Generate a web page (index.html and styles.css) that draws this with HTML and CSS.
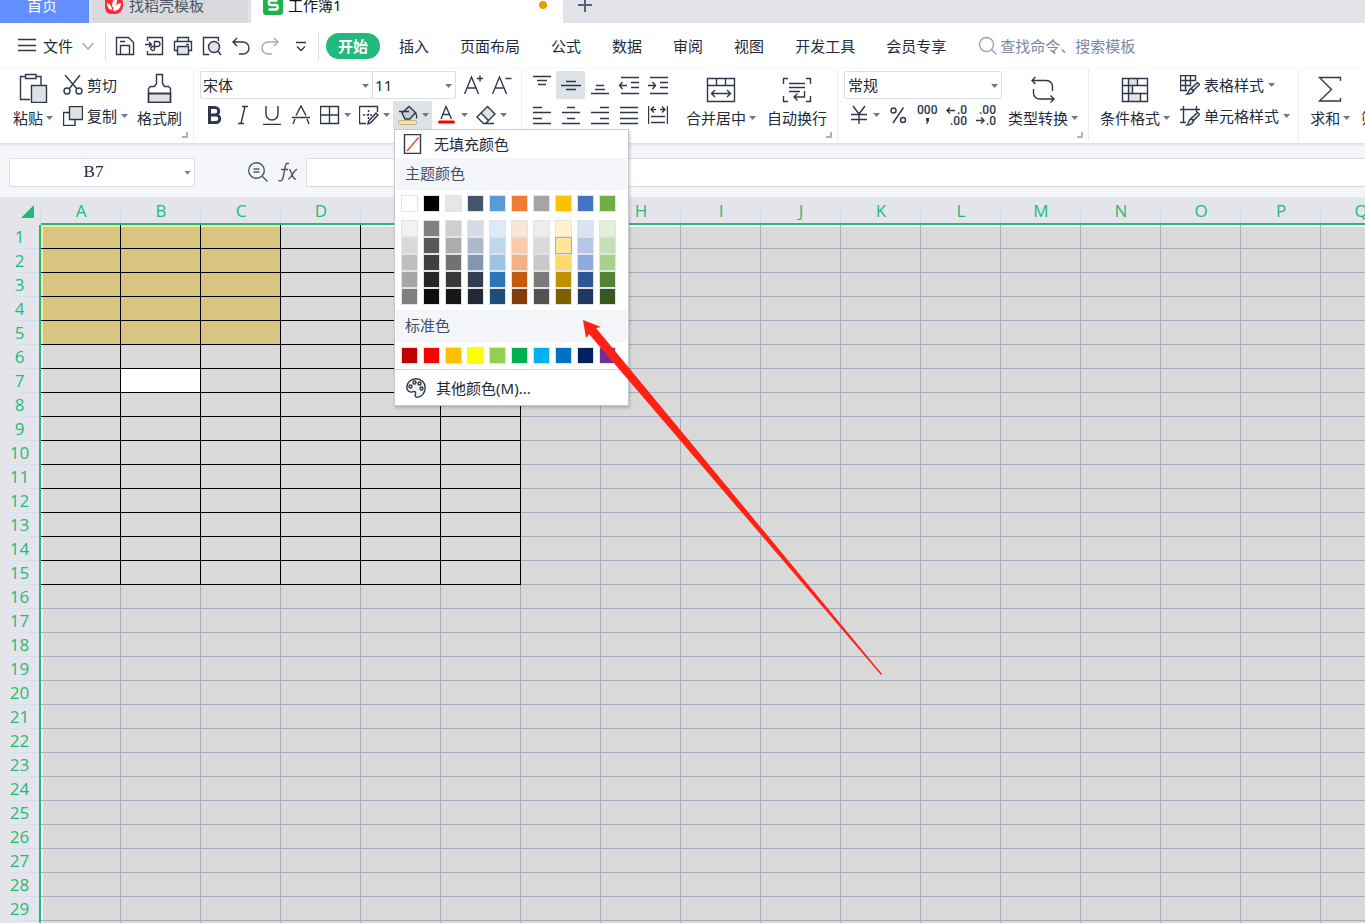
FILE: index.html
```html
<!DOCTYPE html>
<html lang="zh-CN">
<head>
<meta charset="utf-8">
<title>工作簿1</title>
<link rel="stylesheet" href="styles.css">
</head>
<body>
<header class="tabs">
  <button class="tab tab-home">首页</button>
  <button class="tab tab-docer">
    <svg class="tab-icon" viewBox="0 0 20 20"><path d="M1 0h10a8 8 0 0 1 8 8v3a8 8 0 0 1-8 8H7a6 6 0 0 1-6-6z" fill="#fb2c36"/><path d="M8 15C4 14 3 11 3 8c3 1 5 3 5 7zM9 13C7 9 9 5 12 2c2 4 1 8-3 11zM9 16c0-4 3-7 8-8 0 5-3 8-8 8z" fill="#fff"/></svg>
    找稻壳模板</button>
  <button class="tab tab-book">
    <svg class="tab-icon" viewBox="0 0 20 20"><rect width="20" height="20" rx="3" fill="#1fb14c"/><path d="M14.500 5.500H8a2.200 2.200 0 0 0 0 4.500h4.500a2.200 2.200 0 0 1 0 4.500H5.500" fill="none" stroke="#fff" stroke-width="2.400"/></svg>
    工作簿1<span class="unsaved"></span></button>
  <button class="tab-new" aria-label="新建"><svg viewBox="0 0 16 16"><path d="M8 1v14M1 8h14" stroke="#56617f" stroke-width="2"/></svg></button>
</header>

<nav class="menu">
  <button class="file">
    <svg class="i20" viewBox="0 0 20 20"><path d="M1 3.500h18M1 9.500h18M1 14.500h18"/></svg>
    文件
    <svg class="i12 faint" viewBox="0 0 12 12"><path d="M.5 3L6 9l5.500-6"/></svg>
  </button>
  <span class="rule"></span>
  <div class="quick">
    <button aria-label="保存"><svg class="i20" viewBox="0 0 20 20"><path d="M1.500 1.500h12l5 5v12h-17z"/><path d="M5.500 18V9.500h9V18M5 5.500h5"/></svg></button>
    <button aria-label="输出为PDF"><svg class="i20" viewBox="0 0 20 20"><path d="M3.500 5V1.500h15v17h-15V15M1 8.500h6M5 6l2.500 2.500L5 11"/><path d="M10.500 11V5.500h3a2.500 2.500 0 0 1 0 5H9a2 2 0 1 0 1.500 3V9"/></svg></button>
    <button aria-label="打印"><svg class="i20" viewBox="0 0 20 20"><path d="M4.500 5.500v-4h11v4M4.500 14.500h-3v-9h17v9h-3"/><path class="tint" d="M4.500 10.500h11v8h-11z"/><path d="M13 8.500h3"/></svg></button>
    <button aria-label="打印预览"><svg class="i20" viewBox="0 0 20 20"><path d="M5 18.500H1.500v-17h15V5M5 18.500h2M16 15l3 4"/><circle class="tint" cx="12" cy="11" r="5.500"/></svg></button>
    <button aria-label="撤销"><svg class="i20" viewBox="0 0 20 20"><path d="M6 2L2 6l4 4M2 6h10a6 6 0 0 1 0 12H8"/></svg></button>
    <button aria-label="恢复"><svg class="i20 faint" viewBox="0 0 20 20"><path d="M14 2l4 4-4 4M18 6H8a6 6 0 0 0 0 12h4"/></svg></button>
    <button aria-label="自定义"><svg class="i20" viewBox="0 0 20 20"><path d="M6 6.500h10M7 10.500l4 4 4-4"/></svg></button>
  </div>
  <span class="rule"></span>
  <button class="pill">开始</button>
  <div class="menu-tabs">
    <button>插入</button><button>页面布局</button><button>公式</button><button>数据</button><button>审阅</button><button>视图</button><button>开发工具</button><button>会员专享</button>
  </div>
  <label class="search">
    <svg class="i20" viewBox="0 0 20 20"><circle cx="8.500" cy="8.500" r="7"/><path d="M13.500 13.500l5 5"/></svg>
    <input type="text" placeholder="查找命令、搜索模板" aria-label="查找命令、搜索模板">
  </label>
</nav>

<section class="ribbon">
  <div class="group group-clip">
    <button class="big">
      <svg class="i30" viewBox="0 0 30 30"><path d="M12 26.500H2.500v-23H7M18 3.500h5V12"/><path d="M7.500 1.500h10.500v4H7.500z"/><path class="tint" d="M13.500 12.500h15v17h-15z"/></svg>
      <span>粘贴<i class="caret"></i></span>
    </button>
    <div class="stack lines">
      <button class="line"><svg class="i20" viewBox="0 0 20 20"><path d="M2 0l12 14M17 0L6 14"/><circle cx="4" cy="16" r="3"/><circle cx="16" cy="16" r="3"/></svg>剪切</button>
      <button class="line"><svg class="i20" viewBox="0 0 20 20"><path d="M6 6.500H.5v13H12V14"/><path class="tint" d="M6.500.5h13v13h-13z"/></svg>复制<i class="caret"></i></button>
    </div>
    <button class="big">
      <svg class="i30" viewBox="0 0 30 30"><path class="tint" d="M3.500 20.500h22v9h-22z"/><path d="M11.500 1.500h6v9l2 3h4l2 2v14h-22v-14l2-2h4l2-3zM3.500 20.500h22"/></svg>
      <span>格式刷</span>
    </button>
    <i class="corner"></i>
  </div>

  <div class="group group-font">
    <div class="stack">
      <div class="row">
        <span class="pick pick-font"><select aria-label="字体"><option>宋体</option></select></span>
        <span class="pick pick-size"><select aria-label="字号"><option>11</option></select></span>
        <button class="tool" aria-label="增大字号"><svg class="i20" viewBox="0 0 20 20"><path d="M.5 19L7.500 2l7 17M3 13h9M13 3.500h6M16 .5v6"/></svg></button>
        <button class="tool" aria-label="减小字号"><svg class="i20" viewBox="0 0 20 20"><path d="M.5 19L7.500 2l7 17M3 13h9M13.500 3.500h6"/></svg></button>
      </div>
      <div class="row row-format">
        <button class="tool" aria-label="加粗"><svg class="i20" viewBox="0 0 20 20"><path class="bold" d="M5.500 2.500h5.500a3.500 3.500 0 0 1 0 7.500H5.500zM5.500 10h6.500a3.700 3.700 0 0 1 0 7.500H5.500z"/></svg></button>
        <button class="tool" aria-label="倾斜"><svg class="i20" viewBox="0 0 20 20"><path d="M9 1.500h6M5 18.500h6M12 1.500L8 18.500"/></svg></button>
        <button class="tool" aria-label="下划线"><svg class="i20" viewBox="0 0 20 20"><path d="M4 1v8a6 6 0 0 0 12 0V1M1 19.500h18"/></svg></button>
        <button class="tool" aria-label="删除线"><svg class="i20" viewBox="0 0 20 20"><path d="M5 10.500L10 1l5 9.500M1 12.500h18M4 14l-2 5M16 14l2 5"/></svg></button>
        <button class="split" aria-label="边框"><svg class="i20" viewBox="0 0 20 20"><path d="M.5 1.500h18v17H.5zM9.500 1.500v17M.5 10h18"/></svg><i class="caret"></i></button>
        <button class="split" aria-label="绘图边框"><svg class="i20" viewBox="0 0 20 20"><path d="M7 18.500H.5v-17h18V7"/><path d="M9.500 5v10M4 10h10" stroke-dasharray="2 1.500"/><path class="tint" d="M17 8l2 2-7 7.500-3 1.500.5-3z"/></svg><i class="caret"></i></button>
        <div class="fill-wrap">
          <button class="split on" aria-label="填充颜色" aria-expanded="true"><svg class="i20" viewBox="0 0 20 20"><path class="tint dark" d="M4 8L11 1.500l6.500 6L12 14H7z"/><path d="M1 6.500h10M17.500 7.500c1 2 1.500 4 1 6"/><rect x=".5" y="15.500" width="18" height="4" rx="1" fill="#ffe38c" stroke="#a9a17f" stroke-width=".7"/></svg><i class="caret"></i></button>
          <div class="palette" id="palette">
            <button class="no-fill"><svg class="i20" viewBox="0 0 20 20"><path d="M1.500.5h16v19h-16z"/><path d="M4 17L15.500 3.500" class="red"/></svg>无填充颜色</button>
            <h3>主题颜色</h3>
            <div class="swatches" data-set="theme"></div>
            <div class="swatches shades" data-set="shades"></div>
            <h3>标准色</h3>
            <div class="swatches standard" data-set="standard"></div>
            <button class="more"><svg class="i20" viewBox="0 0 20 20"><path class="pale" d="M10 .8c5 0 9.200 3.500 9.200 8.700 0 6-4.200 9.700-8 9.700-2 0-2.500-1.500-1.700-3 .8-2-.5-3-2-2.500C4 15 .8 13 .8 9.500.8 4.500 5 .8 10 .8z"/><circle cx="4.500" cy="8.500" r="1.500"/><circle cx="8.500" cy="4.500" r="1.500"/><circle cx="13.500" cy="5.500" r="1.500"/><circle cx="15.500" cy="10.500" r="1.500"/></svg>其他颜色(M)...</button>
          </div>
        </div>
        <button class="split" aria-label="字体颜色"><svg class="i20" viewBox="0 0 20 20"><path d="M4 14L9 1.500 14.500 14M6 9.500h6.500"/><rect x="1" y="15.500" width="17" height="3" rx="1.500" class="redfill"/></svg><i class="caret"></i></button>
        <button class="split" aria-label="清除"><svg class="i20" viewBox="0 0 20 20"><path class="tint" d="M5 8l6.500-6.500L19 9l-6.500 6.500z"/><path d="M5 8l-4 4 6.500 6.500h2l3-3M7.500 18.500H18"/></svg><i class="caret"></i></button>
      </div>
    </div>
  </div>

  <div class="group group-align">
    <div class="stack">
      <div class="row">
        <button class="tool" aria-label="顶端对齐"><svg class="i20" viewBox="0 0 20 20"><path d="M1 1.500h18M5 5.500h10M6 9.500h8"/></svg></button>
        <button class="tool on" aria-label="垂直居中"><svg class="i20" viewBox="0 0 20 20"><path d="M5 6.500h10M0 10.500h20M5 14.500h10"/></svg></button>
        <button class="tool" aria-label="底端对齐"><svg class="i20" viewBox="0 0 20 20"><path d="M6 10.500h8M5 14.500h10M1 18.500h18"/></svg></button>
        <button class="tool" aria-label="减少缩进"><svg class="i20" viewBox="0 0 20 20"><path d="M2 2.500h18M12 7.500h8M12 12.500h8M2 18.500h18M0 10.500h8M3.500 7L.5 10.500l3 3.500"/></svg></button>
        <button class="tool" aria-label="增加缩进"><svg class="i20" viewBox="0 0 20 20"><path d="M2 2.500h18M12 7.500h8M12 12.500h8M2 18.500h18M0 10.500h8M4.500 7l3 3.500-3 3.500"/></svg></button>
      </div>
      <div class="row">
        <button class="tool" aria-label="左对齐"><svg class="i20" viewBox="0 0 20 20"><path d="M1 2.500h9M1 7.500h18M1 13.500h9M1 18.500h18"/></svg></button>
        <button class="tool" aria-label="居中"><svg class="i20" viewBox="0 0 20 20"><path d="M6 2.500h8M1 7.500h18M6 13.500h8M1 18.500h18"/></svg></button>
        <button class="tool" aria-label="右对齐"><svg class="i20" viewBox="0 0 20 20"><path d="M10 2.500h9M1 7.500h18M10 13.500h9M1 18.500h18"/></svg></button>
        <button class="tool" aria-label="两端对齐"><svg class="i20" viewBox="0 0 20 20"><path d="M1 2.500h18M1 7.500h18M1 13.500h18M1 18.500h18"/></svg></button>
        <button class="tool" aria-label="分散对齐"><svg class="i20" viewBox="0 0 20 20"><path d="M.5 1v18M19.500 1v18M3 11.500h14M3 17.500h14M3 4.500h5M12 4.500h5M6 1.500l-3 3 3 3M14 1.500l3 3-3 3"/></svg></button>
      </div>
    </div>
    <button class="big">
      <svg class="i30" viewBox="0 0 30 30"><path d="M1.500 5.500h27v23h-27zM1.500 12.500h27M10.500 5.500v7M19.500 5.500v7M5.500 20.500h19M9 17l-3.500 3.500L9 24M21 17l3.500 3.500L21 24"/></svg>
      <span>合并居中<i class="caret"></i></span>
    </button>
    <button class="big">
      <svg class="i30" viewBox="0 0 30 30"><path d="M6 5.500H1.500V11M24 5.500h4.500V11M6 28.500H1.500V23M24 28.500h4.500V23M7 10.500h16M7 14.500h16M7 18.500h11M22.500 18v6H12M15.500 20.500L12 24l3.500 3.500"/></svg>
      <span>自动换行</span>
    </button>
    <i class="corner"></i>
  </div>

  <div class="group group-number">
    <div class="stack">
      <div class="row"><span class="pick pick-format"><select aria-label="数字格式"><option>常规</option></select></span></div>
      <div class="row">
        <button class="split" aria-label="货币"><svg class="i20" viewBox="0 0 20 20"><path d="M4 1l6 8 6-8M10 9v10M2 9.500h16M2 14.500h16"/></svg><i class="caret"></i></button>
        <button class="tool" aria-label="百分比"><svg class="i20" viewBox="0 0 20 20"><circle cx="5.500" cy="5.500" r="2.500"/><circle cx="15" cy="15" r="2.500"/><path d="M15.500 2.500L5 18"/></svg></button>
        <button class="tool" aria-label="千位分隔"><svg class="i22" viewBox="0 0 22 20"><text x="1" y="9">000</text><path class="solid" d="M10 13h3v3l-2 3h-1l1-3h-1z"/></svg></button>
        <button class="tool" aria-label="增加小数位"><svg class="i22" viewBox="0 0 22 20"><text x="12" y="9">.0</text><text x="5" y="20">.00</text><path d="M2 5.500h8M5 2.500l-3 3 3 3"/></svg></button>
        <button class="tool" aria-label="减少小数位"><svg class="i22" viewBox="0 0 22 20"><text x="5" y="9">.00</text><text x="12" y="20">.0</text><path d="M2 15.500h8M7 12.500l3 3-3 3"/></svg></button>
      </div>
    </div>
    <button class="big">
      <svg class="i30" viewBox="0 0 30 30"><path d="M7.500 4L4 7.500 7.500 11M4 7.500h14.500a6 6 0 0 1 6 6V18M5.500 16v4a6 6 0 0 0 6 6H26M22.500 22.500L26 26l-3.500 3.500"/></svg>
      <span>类型转换<i class="caret"></i></span>
    </button>
    <i class="corner"></i>
  </div>

  <div class="group group-style">
    <button class="big">
      <svg class="i30" viewBox="0 0 30 30"><path class="fillonly" d="M8 5h10v8H8zM12 13h-4v7h4zM8 20h12v8H8z"/><path d="M2.500 5.500h25v23h-25zM2.500 12.500h25M2.500 20.500h25M8.500 5.500v23M17.500 5.500v7M12.500 12.500v8M20.500 20.500v8"/></svg>
      <span>条件格式<i class="caret"></i></span>
    </button>
    <div class="stack lines">
      <button class="line"><svg class="i20" viewBox="0 0 20 20"><path d="M7 15.500H.5v-15h15V6M.5 5.500h15M.5 10.500H11M5.500.5v15M10.500.5v11"/><path class="tint" d="M17.500 7.500l2 2-6 6-2.500-2zM11 13.500l2.500 2.500c-1 3-4 3-6.500 3 1.500-1 1.500-4.500 4-5.500z"/></svg>表格样式<i class="caret"></i></button>
      <button class="line"><svg class="i20" viewBox="0 0 20 20"><path d="M0 3.500h20M3.500 0v17M16.500 0v6M0 16.500h6"/><path class="tint" d="M17.500 6.500l2 2-6 6-2.500-2zM11 12.500l2.500 2.500c-1 3-4 4-6.500 4 1.500-1 1.500-5.500 4-6.500z"/></svg>单元格样式<i class="caret"></i></button>
    </div>
  </div>

  <div class="group group-calc">
    <button class="big">
      <svg class="i30" viewBox="0 0 30 30"><path d="M25.500 8V4.500h-21l12 12-12 11.500h21v-3"/></svg>
      <span>求和<i class="caret"></i></span>
    </button>
    <button class="big">
      <svg class="i30" viewBox="0 0 30 30"></svg>
      <span>筛选</span>
    </button>
  </div>
</section>

<section class="formula">
  <span class="pick pick-name"><input type="text" value="B7" aria-label="名称框"></span>
  <button aria-label="查找"><svg class="i20" viewBox="0 0 20 20"><circle cx="8.500" cy="8.500" r="7.800"/><path d="M14 14l5.500 5.500M5.500 7h6M5.500 10h6"/></svg></button>
  <button class="fx" aria-label="插入函数"><svg class="i20" viewBox="0 0 20 20"><path d="M11 1.500C8 .5 7.500 3 7 6L5 16c-.5 2.500-2 3.500-4.500 2.500M3 7.500h7M11 8c3-1 2.500 10 7 9M19 7.500c-3 0-6 9.500-9 9.500"/></svg></button>
  <input class="formula-text" type="text" aria-label="编辑栏">
</section>

<main class="sheet">
  <table class="grid">
    <thead><tr id="columns"><th class="all"><i></i></th></tr></thead>
    <tbody id="rows"></tbody>
  </table>
</main>

<svg class="pointer" viewBox="0 0 300 356"><path d="M0 0l18 7-5 1 286 346-1 1L6 14l-3 4z"/></svg>

<script src="app.js"></script>
</body>
</html>
```
FILE: styles.css
```css
* { box-sizing: border-box; }
body {
  margin: 0;
  height: 100vh;
  overflow: hidden;
  display: flex;
  flex-direction: column;
  background: #f5f6f9;
  color: #222a3c;
  font: 15px/20px "Noto Sans", "Noto Sans CJK SC", sans-serif;
}
button, select, input { font: inherit; color: inherit; }
button { display: flex; align-items: center; padding: 0; border: 0; background: none; white-space: nowrap; flex: none; }
svg { display: block; flex: none; fill: none; stroke: #2e374b; stroke-width: 1.4; }
svg text { font: 500 12px Roboto, sans-serif; fill: #2e374b; stroke: none; }
.i12 { width: 12px; height: 12px; }
.i20 { width: 20px; height: 20px; }
.i22 { width: 22px; height: 20px; overflow: visible; }
.i30 { width: 30px; height: 30px; }
.faint { stroke: #a6a9b0; }
.tint { fill: #e0e3e6; }
.tint.dark { fill: #c9ced3; }
.pale { fill: #f3f4f6; }
.fillonly { fill: #e0e3e6; stroke: none; }
.solid { fill: #2e374b; stroke: none; }
.bold { stroke-width: 3; }
.red { stroke: #f0473c; }
.redfill { fill: #ff0000; stroke: none; }
.caret { width: 7px; height: 4px; background: #6d7891; clip-path: polygon(0 0, 100% 0, 50% 100%); }

/* document tabs */
.tabs { display: flex; height: 36px; margin-top: -13px; background: #e2e3e8; flex: none; }
.tab { height: 36px; gap: 5px; }
.tab-icon { width: 20px; height: 20px; stroke: none; }
.tab-home { width: 89px; justify-content: center; padding-right: 5px; margin-right: 3px; background: #638fff; color: #fff; }
.tab-docer { width: 156px; padding-left: 12px; margin-right: 3px; background: #d8dade; color: #4c5468; }
.tab-book { width: 312px; padding: 0 16px 0 12px; background: #fff; color: #111; }
.unsaved { width: 8px; height: 8px; margin-left: auto; border-radius: 50%; background: #e79a06; }
.tab-new { margin-left: 14px; }
.tab-new svg { width: 16px; height: 16px; }

/* menu */
.menu { display: flex; align-items: center; height: 46px; padding-left: 17px; background: #fff; flex: none; }
.file { gap: 6px; }
.file .i12 { margin-left: 3px; }
.rule { width: 1px; height: 30px; margin-left: 11px; background: #dfe1e6; }
.quick { display: flex; margin-left: 4px; }
.quick button { width: 29px; height: 28px; justify-content: center; }
.quick button:last-child { width: 32px; }
.quick + .rule { margin-left: 2px; }
.pill { height: 26px; padding: 0 12px; margin-left: 7px; border-radius: 13px; background: #22b97c; color: #fff; font-weight: 700; }
.menu-tabs { display: flex; gap: 31px; margin-left: 19px; }
.search { display: flex; align-items: center; flex: 1; margin-left: 32px; }
.search svg { stroke: #97a1b8; }
.search input { flex: 1; min-width: 0; padding: 0; margin-left: 2px; border: 0; outline: 0; background: none; }
.search input::placeholder { color: #7a869f; opacity: 1; }

/* ribbon */
.ribbon { position: relative; z-index: 2; display: flex; height: 74px; background: #fff; box-shadow: 0 1px 3px #cfd3da; flex: none; }
.group { position: relative; display: flex; align-items: flex-start; flex: none; height: 72px; padding-top: 2px; border-right: 1px solid #eceef0; }
.group-clip { padding-left: 13px; padding-right: 11px; }
.group-clip .stack { margin: 0 9px 0 10px; }
.group-font { padding-left: 6px; padding-right: 5px; }
.group-align { padding-left: 5px; padding-right: 10px; }
.group-align .stack { margin-right: 14px; }
.group-align .big + .big { margin-left: 11px; }
.group-number { padding-left: 6px; padding-right: 10px; }
.group-number .stack { margin-right: 6px; }
.group-style { padding-left: 11px; padding-right: 8px; }
.group-style .stack { margin-left: 10px; }
.group-calc { padding-left: 11px; gap: 11px; border: 0; }
.big { flex-direction: column; gap: 5px; margin-top: 2px; }
.big span { display: flex; align-items: center; gap: 3px; }
.stack { display: flex; flex-direction: column; gap: 2px; }
.lines { gap: 3px; }
.line { height: 28px; gap: 4px; }
.row { display: flex; height: 28px; }
.row-format { margin-left: -1px; }
.tool { width: 29px; height: 28px; justify-content: center; border-radius: 2px; }
.group-font .row:first-child .tool { width: 28px; }
.split { width: 39px; height: 28px; gap: 4px; padding-left: 5px; border-radius: 2px; }
.on { background: #dde2e6; }
.pick-size + .tool { margin-left: 4px; }
.corner { position: absolute; right: 5px; bottom: 3px; width: 6px; height: 6px; border: solid #aab3c6; border-width: 0 2px 2px 0; }
.pick { position: relative; display: flex; flex: none; }
.pick::after { content: ""; position: absolute; right: 4px; top: 13px; width: 7px; height: 4px; background: #6d7891; clip-path: polygon(0 0, 100% 0, 50% 100%); pointer-events: none; }
.pick select, .pick input { width: 100%; height: 28px; padding: 0 2px; border: 1px solid #dcdee3; border-radius: 2px; background: #fff; appearance: none; outline: 0; }
.pick-font { width: 173px; }
.pick-size { width: 84px; margin-left: -1px; }
.pick-format { width: 158px; }
.pick.pick-format select { padding-left: 3px; }

/* fill colour menu */
.fill-wrap { position: relative; }
.palette { position: absolute; left: 1px; top: 28px; width: 235px; border: 1px solid #c6c8ce; background: #fff; box-shadow: 1px 2px 3px #0003; }
.palette h3 { margin: 0 1px; padding: 5px 9px; height: 32px; background: #f3f5f8; color: #464f66; font-size: 15px; font-weight: 400; line-height: 20px; }
.no-fill { width: 100%; height: 28px; gap: 11px; padding-left: 8px; }
.swatches { display: grid; grid-template-columns: repeat(10, 17px); column-gap: 5px; padding: 5px 6px 0; }
.swatches button { height: 17px; border: 1px solid #e1e3e8; }
.swatches button.chosen { border-color: #fba30b; }
.shades { padding-top: 8px; padding-bottom: 5px; }
.standard { padding-bottom: 5px; border-bottom: 1px solid #d9dbe0; }
.more { width: 100%; height: 35px; gap: 10px; padding-left: 11px; }

/* formula bar */
.formula { display: flex; align-items: center; height: 54px; padding: 4px 0 0 9px; flex: none; }
.formula svg { stroke: #4c566e; }
.pick-name { width: 186px; margin-right: 53px; }
.pick.pick-name input { height: 29px; padding-right: 19px; text-align: center; font: 17px "Liberation Serif", serif; }
.fx { margin-left: 10px; }
.formula-text { flex: 1; min-width: 0; height: 29px; margin: 0 0 0 8px; border: 1px solid #d8dadf; border-right: 0; border-radius: 2px 0 0 2px; background: #fff; outline: 0; }

/* sheet */
.sheet { flex: 1; overflow: hidden; background: #e4e5ea; }
.grid { width: 1401px; table-layout: fixed; border-spacing: 0; font: 17px/22px "Open Sans", sans-serif; color: #1fba7b; }
.grid th, .grid td { padding: 0; font-weight: 400; }
.grid thead th { width: 80px; height: 28px; padding-top: 1px; border-bottom: 2px solid #22b97c; background: linear-gradient(#e4e5ea, #cfdaf0) right / 1px 100% no-repeat; }
.grid thead th.all { width: 41px; border: 0; }
.all i { display: block; width: 13px; height: 13px; margin-left: 21px; background: #1fba7b; clip-path: polygon(100% 0, 100% 100%, 0 100%); }
.grid tbody th { height: 24px; border-right: 2px solid #22b97c; background: linear-gradient(90deg, #e4e5ea, #cfdaf0) bottom / 100% 1px no-repeat; }
.grid td { --line: #a5adbf; --edge: #fff; background: #d9d9d9; box-shadow: inset -1px -1px var(--line); }
.grid td.boxed { --line: #000; }
.grid td.gold { --edge: #ffe699; background: #d9c481; }
.grid td.active { background: #fff; }
.grid tr:first-child td { box-shadow: inset -1px -1px var(--line), inset 0 2px var(--edge); }
.grid td:nth-child(2) { box-shadow: inset -1px -1px var(--line), inset 2px 0 var(--edge); }
.grid tr:first-child td:nth-child(2) { box-shadow: inset -1px -1px var(--line), inset 2px 2px var(--edge); }

/* annotation arrow lies over the sheet and the menu */
.pointer { position: absolute; z-index: 5; left: 583px; top: 320px; width: 300px; height: 356px; fill: #ff2113; stroke: none; pointer-events: none; }
```
FILE: app.js
```js
const sets = {
  theme: ["ffffff 000000 e7e6e6 44546a 5b9bd5 ed7d31 a5a5a5 ffc000 4472c4 70ad47"],
  shades: [
    "f2f2f2 7f7f7f d0cece d6dce5 deebf7 fbe5d6 ededed fff2cc dae3f3 e2f0d9",
    "d9d9d9 595959 afabab adb9ca bdd7ee f8cbad dbdbdb ffe699 b4c7e7 c5e0b4",
    "bfbfbf 404040 767171 8497b0 9dc3e6 f4b183 c9c9c9 ffd966 8faadc a9d18e",
    "a6a6a6 262626 3b3838 333f50 2e75b6 c55a11 7b7b7b bf9000 2f5597 548235",
    "7f7f7f 0d0d0d 171717 222a35 1f4e79 843c0c 525252 7f6000 203864 385723"
  ],
  standard: ["c00000 ff0000 ffc000 ffff00 92d050 00b050 00b0f0 0070c0 002060 7030a0"]
};
document.querySelectorAll(".swatches").forEach(box => {
  sets[box.dataset.set].join(" ").split(" ").forEach(hex => {
    const b = document.createElement("button");
    b.style.backgroundColor = "#" + hex;
    b.setAttribute("aria-label", "#" + hex);
    if (hex === "ffe699") b.className = "chosen";
    box.append(b);
  });
});

const letters = "ABCDEFGHIJKLMNOPQ";
for (const letter of letters) {
  const th = document.createElement("th");
  th.textContent = letter;
  document.getElementById("columns").append(th);
}
for (let r = 1; r <= 30; r++) {
  const tr = document.createElement("tr");
  const th = document.createElement("th");
  th.textContent = r;
  tr.append(th);
  for (let c = 1; c <= letters.length; c++) {
    const td = document.createElement("td");
    if (r <= 15 && c <= 6) td.classList.add("boxed");
    if (r <= 5 && c <= 3) td.classList.add("gold");
    if (r === 7 && c === 2) td.classList.add("active");
    tr.append(td);
  }
  document.getElementById("rows").append(tr);
}
```
